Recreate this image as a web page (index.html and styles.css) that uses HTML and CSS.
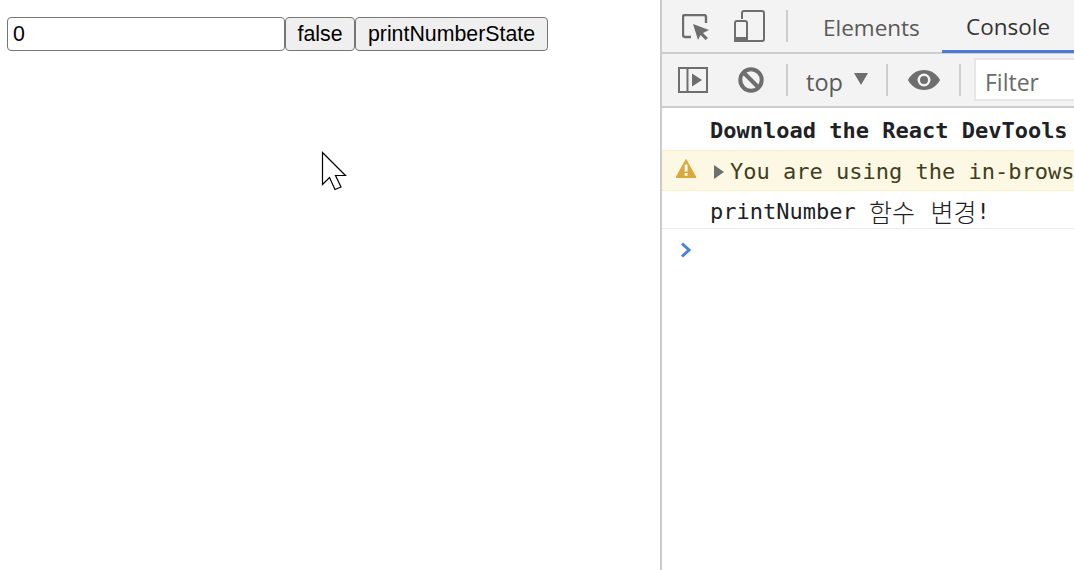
FILE: index.html
```html
<!DOCTYPE html>
<html lang="en">
<head>
<meta charset="utf-8">
<title>printNumber</title>
<link rel="stylesheet" href="styles.css">
</head>
<body>
<main class="page">
  <div class="controls">
    <input class="field" type="text" value="0">
    <button class="btn btn-false">false</button>
    <button class="btn btn-print">printNumberState</button>
  </div>
  <svg class="cursor" width="26" height="40" viewBox="0 0 26 40">
    <path d="M1.5 1.5V33.5L8.5 26.5L14 38.5L20 36L14.5 24.5H24.5Z" fill="#fff" stroke="#000" stroke-width="1.2"/>
  </svg>
</main>
<aside class="devtools">
  <div class="tabbar">
    <svg class="ic ic-inspect" width="28" height="26" viewBox="0 0 28 26">
      <path d="M9 23H3a2 2 0 0 1-2-2V3a2 2 0 0 1 2-2h19a2 2 0 0 1 2 2v6" fill="none" stroke="#6e6e6e" stroke-width="2.4"/>
      <path d="M11 10L27 16L21 19L26 24L23.500 26L18.500 21L16 26Z" fill="#6e6e6e"/>
    </svg>
    <svg class="ic ic-device" width="31" height="32" viewBox="0 0 31 32">
      <path d="M8 9V3a2 2 0 0 1 2-2h18a2 2 0 0 1 2 2v26a2 2 0 0 1-2 2H14" fill="none" stroke="#6e6e6e" stroke-width="2"/>
      <path d="M1 13a2 2 0 0 1 2-2h8a2 2 0 0 1 2 2v18H1Z" fill="none" stroke="#6e6e6e" stroke-width="2"/>
      <rect x="0" y="27" width="14" height="5" rx="1" fill="#6e6e6e"/>
    </svg>
    <span class="divider div-tab"></span>
    <span class="tab tab-elements">Elements</span>
    <span class="tab tab-console">Console</span>
  </div>
  <div class="filterbar">
    <svg class="ic ic-sidebar" width="30" height="26" viewBox="0 0 30 26">
      <rect x="1" y="1" width="28" height="24" fill="none" stroke="#6e6e6e" stroke-width="2"/>
      <path d="M9.500 1V25" stroke="#6e6e6e" stroke-width="2"/>
      <path d="M14 6.500L24 13L14 19.500Z" fill="#6e6e6e"/>
    </svg>
    <svg class="ic ic-block" width="26" height="26" viewBox="0 0 26 26">
      <circle cx="13" cy="13" r="10.700" fill="none" stroke="#6e6e6e" stroke-width="4"/>
      <path d="M5.500 5.500L20.500 20.500" stroke="#6e6e6e" stroke-width="4"/>
    </svg>
    <span class="divider div-a"></span>
    <span class="context">top</span>
    <svg class="ic ic-caret" width="14" height="12" viewBox="0 0 14 12"><path d="M0 0H14L7 12Z" fill="#6e6e6e"/></svg>
    <span class="divider div-b"></span>
    <svg class="ic ic-eye" width="32" height="20" viewBox="0 0 32 20">
      <path fill-rule="evenodd" d="M16 0C9 0 3 4 0 10c3 6 9 10 16 10s13-4 16-10C29 4 23 0 16 0Zm0 16.500a6.500 6.500 0 1 1 0-13 6.500 6.500 0 0 1 0 13Zm0-10.500a4 4 0 1 0 0 8 4 4 0 0 0 0-8Z" fill="#6e6e6e"/>
    </svg>
    <span class="divider div-c"></span>
    <div class="filter">Filter</div>
  </div>
  <div class="log">
    <div class="msg msg-bold">Download the React DevTools for a better development experience</div>
    <div class="msg msg-warn">
      <svg class="warn-icon" width="20" height="20" viewBox="0 0 20 20">
        <path d="M10 0.500L20 18.500H0Z" fill="#dba83c" stroke="#dba83c" stroke-linejoin="round"/>
        <rect x="8.700" y="5.500" width="2.800" height="7" fill="#fff"/>
        <rect x="8.700" y="14" width="2.800" height="2.800" fill="#fff"/>
      </svg>
      <svg class="warn-arrow" width="10" height="14" viewBox="0 0 10 14"><path d="M0 0L10 7L0 14Z" fill="#6e6e6e"/></svg>
      <span class="warn-text">You are using the in-browser Babel transformer.</span>
    </div>
    <div class="msg msg-plain"><span>printNumber&nbsp;</span><span class="ko">함수 변경</span><span>!</span></div>
    <div class="prompt">
      <svg width="12" height="16" viewBox="0 0 12 16"><path d="M2 1.500L9 8L2 14.500" fill="none" stroke="#4a80dc" stroke-width="3"/></svg>
    </div>
  </div>
</aside>
</body>
</html>
```

FILE: styles.css
```css
* { box-sizing: border-box; }
html, body { margin: 0; height: 570px; overflow: hidden; background: #fff; }
body { display: flex; width: 1074px; }

.page { position: relative; width: 660px; flex: none; padding: 17px 0 0 7px; }
.controls { display: flex; height: 34px; font: 21.330px "Liberation Sans", Arial, sans-serif; }
.field {
  width: 278px; height: 34px; padding: 0 5px; margin: 0;
  font: inherit; color: #000; background: #fff;
  border: 1px solid #767676; border-radius: 4px; outline: none;
}
.btn {
  height: 34px; padding: 0; margin: 0;
  font: inherit; color: #000; background: #efefef;
  border: 1px solid #767676; border-radius: 4px;
}
.btn-false { width: 70px; }
.btn-print { width: 193px; }
.cursor { position: absolute; left: 321px; top: 151px; }

.devtools {
  width: 414px; flex: none; height: 570px; overflow: hidden;
  border-left: 2px solid #cbcbcb;
  font-family: "Open Sans", "Noto Sans", sans-serif;
  white-space: nowrap;
}
.ic, .divider { flex: none; display: block; }
.divider { width: 2px; height: 32px; background: #cdcdcd; }

.tabbar {
  display: flex; align-items: center; height: 54px;
  background: #f3f3f3; border-bottom: 2px solid #cdcdcd;
}
.ic-inspect { margin: 1px 0 0 20px; }
.ic-device { margin: 0 0 0 24px; }
.div-tab { margin-left: 21px; }
.tab {
  display: flex; align-items: center; height: 54px; font-size: 22.500px; color: #5a5a5a;
}
.tab-elements { margin-left: 35px; width: 119px; padding-top: 2px; }
.tab-console {
  width: 132px; padding: 3px 0 0 24px; color: #333;
  border-bottom: 3px solid #4d78d6;
}

.filterbar {
  display: flex; align-items: center; height: 54px;
  background: #f3f3f3; border-bottom: 2px solid #cdcdcd;
  padding-bottom: 1px;
}
.ic-sidebar { margin-left: 16px; }
.ic-block { margin-left: 30px; }
.div-a { margin-left: 22px; }
.context { margin-left: 18px; width: 36px; padding-top: 4px; font-size: 23.500px; color: #5a5a5a; }
.ic-caret { margin: -2px 0 0 12px; }
.div-b { margin-left: 18px; }
.ic-eye { margin-left: 20px; }
.div-c { margin-left: 19px; }
.filter {
  flex: 1; height: 43px; margin-left: 13px; padding: 4px 0 0 9px;
  display: flex; align-items: center;
  font-size: 23px; color: #6a6a6a; background: #fff; border: 2px solid #e6e6e6;
  border-right: 0;
}

.log { font: 22px "DejaVu Sans Mono", "Noto Sans CJK KR", monospace; color: #202124; }
.msg { display: flex; align-items: center; padding-left: 48px; }
.msg-bold { height: 42px; padding-top: 2px; font-weight: 700; }
.msg-warn {
  position: relative; height: 41px; padding: 2px 0 0 52px; color: #5c3c00;
  background: #fdf8e3; border-top: 1px solid #fbefc5; border-bottom: 1px solid #fbefc5;
}
.warn-icon { position: absolute; left: 14px; top: 8px; }
.warn-arrow { flex: none; margin-right: 6px; }
.warn-text { color: #3f3f1f; }
.msg-plain { height: 38px; padding-top: 3px; border-bottom: 1px solid #ededed; }
.ko { font-family: "Noto Sans CJK KR", sans-serif; font-size: 25px; font-weight: 300; word-spacing: 10px; }
.prompt { display: flex; padding: 13px 0 0 18px; }
```
